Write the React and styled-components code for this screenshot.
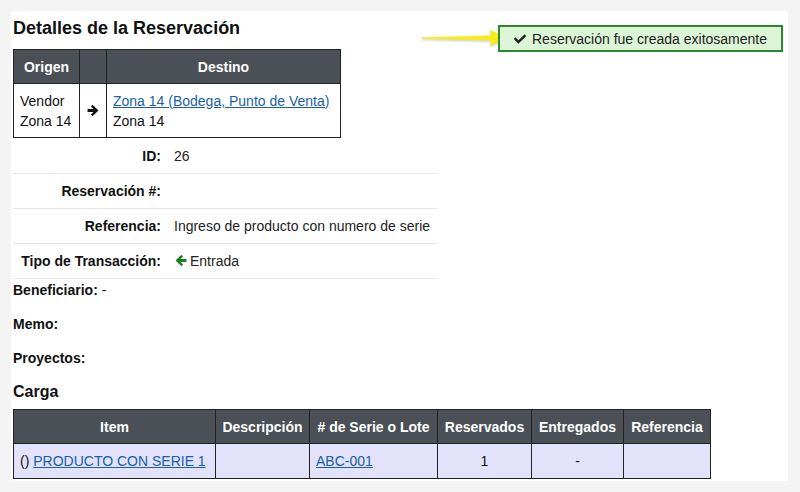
import styled, { createGlobalStyle } from 'styled-components';
import { FaCheck } from 'react-icons/fa';

const GlobalStyle = createGlobalStyle`
	body {
		margin: 0;
		background: #f4f4f4;
		font-family: "Liberation Sans", Arial, sans-serif;
		font-size: 14px;
		color: #111;
	}
`;

const Panel = styled.div`
	position: relative;
	margin: 11px 0 0 11px;
	width: 777px;
	height: 470px;
	background: #fff;
	padding: 6px 2px 0;
	box-sizing: border-box;
`;

const Title = styled.h2`
	margin: 0 0 10px;
	font-size: 18px;
	font-weight: bold;
	line-height: 22px;
`;

const SubTitle = styled.h3`
	margin: 0 0 7px;
	font-size: 16px;
	font-weight: bold;
	line-height: 20px;
`;

const Grid = styled.table`
	border-collapse: collapse;
	th {
		background: #4b5056;
		color: #fff;
		font-weight: bold;
		height: 34px;
		border: 1px solid #222;
		padding: 0 6px;
		font-size: 14px;
		box-sizing: border-box;
	}
	td {
		border: 1px solid #222;
		padding: 0 6px;
		line-height: 20px;
		background: ${(p) => p.$rowBg || '#fff'};
	}
`;

const Head = styled.th`
	width: ${(p) => p.$w}px;
`;

const Cell = styled.td`
	text-align: ${(p) => p.$align || 'left'};
	height: ${(p) => p.$h || 'auto'};
`;

const Link = styled.a`
	color: #1a5fa8;
	text-decoration: underline;
	cursor: pointer;
`;

const Details = styled.table`
	width: 425px;
	border-collapse: collapse;
	margin-top: 1px;
	td {
		height: 34px;
		border-bottom: 1px solid #e8e8e8;
		padding: 0;
	}
`;

const Label = styled.td`
	width: 148px;
	text-align: right;
	font-weight: bold;
	padding-right: 13px !important;
`;

const Value = styled.td`
	color: #222;
`;

const Icon = styled.svg`
	display: inline-block;
	vertical-align: -1px;
	margin-right: ${(p) => p.$gap || 0}px;
`;

const Field = styled.div`
	height: 34px;
	line-height: 20px;
	font-weight: bold;
	span {
		font-weight: normal;
	}
`;

const Alert = styled.div`
	position: absolute;
	top: 14px;
	left: 487px;
	width: 285px;
	height: 27px;
	box-sizing: border-box;
	background: #dcf5d6;
	border: 2px solid #2b8a2b;
	display: flex;
	align-items: center;
	justify-content: center;
	gap: 6px;
	font-size: 14px;
	color: #222;
`;

const Pointer = styled.svg`
	position: absolute;
	top: 17px;
	left: 408px;
`;

const RightArrow = () => (
	<Icon width="13" height="13" viewBox="0 0 12 12">
		<path d="M0.5 4.6 H6 L3.6 2.2 L5.1 0.7 L10.6 6 L5.1 11.3 L3.6 9.8 L6 7.4 H0.5 Z" fill="#111" />
	</Icon>
);

const LeftArrow = () => (
	<Icon width="13" height="13" viewBox="0 0 12 12" $gap={3}>
		<path d="M11.5 4.6 H6 L8.4 2.2 L6.9 0.7 L1.4 6 L6.9 11.3 L8.4 9.8 L6 7.4 H11.5 Z" fill="#1b7f1b" />
	</Icon>
);

export default function App() {
	return (
		<>
			<GlobalStyle />
			<Panel>
				<Title>Detalles de la Reservación</Title>
				<Grid>
					<thead>
						<tr>
							<Head $w={66}>Origen</Head>
							<Head $w={27}></Head>
							<Head $w={234}>Destino</Head>
						</tr>
					</thead>
					<tbody>
						<tr>
							<Cell $h="53px">
								Vendor
								<br />
								Zona 14
							</Cell>
							<Cell $align="center">
								<RightArrow />
							</Cell>
							<Cell>
								<Link>Zona 14 (Bodega, Punto de Venta)</Link>
								<br />
								Zona 14
							</Cell>
						</tr>
					</tbody>
				</Grid>

				<Details>
					<tbody>
						<tr>
							<Label>ID:</Label>
							<Value>26</Value>
						</tr>
						<tr>
							<Label>Reservación #:</Label>
							<Value></Value>
						</tr>
						<tr>
							<Label>Referencia:</Label>
							<Value>Ingreso de producto con numero de serie</Value>
						</tr>
						<tr>
							<Label>Tipo de Transacción:</Label>
							<Value>
								<LeftArrow />
								Entrada
							</Value>
						</tr>
					</tbody>
				</Details>

				<Field style={{ marginTop: 1 }}>
					Beneficiario: <span>-</span>
				</Field>
				<Field>Memo:</Field>
				<Field>Proyectos:</Field>

				<SubTitle>Carga</SubTitle>
				<Grid $rowBg="#e2e2fa">
					<thead>
						<tr>
							<Head $w={202}>Item</Head>
							<Head $w={94}>Descripción</Head>
							<Head $w={128}># de Serie o Lote</Head>
							<Head $w={94}>Reservados</Head>
							<Head $w={92}>Entregados</Head>
							<Head $w={87}>Referencia</Head>
						</tr>
					</thead>
					<tbody>
						<tr>
							<Cell $h="34px">
								() <Link>PRODUCTO CON SERIE 1</Link>
							</Cell>
							<Cell></Cell>
							<Cell>
								<Link>ABC-001</Link>
							</Cell>
							<Cell $align="center">1</Cell>
							<Cell $align="center">-</Cell>
							<Cell></Cell>
						</tr>
					</tbody>
				</Grid>

				<Pointer width="92" height="24" viewBox="0 0 92 24">
					<defs>
						<filter id="sh" x="-20%" y="-50%" width="140%" height="200%">
							<feDropShadow dx="0" dy="1" stdDeviation="1" floodColor="#888" floodOpacity="0.5" />
						</filter>
					</defs>
					<path
						d="M3 9.5 L72 7.5 L71 2 L90 10 L71 18 L72 12.5 L3 11 Z"
						fill="#f5ee1a"
						filter="url(#sh)"
					/>
				</Pointer>
				<Alert>
					<FaCheck size={12} />
					Reservación fue creada exitosamente
				</Alert>
			</Panel>
		</>
	);
}
